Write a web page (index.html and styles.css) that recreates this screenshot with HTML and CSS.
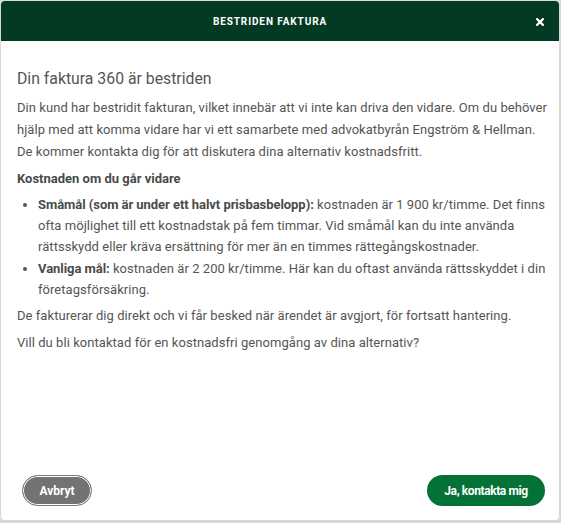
FILE: index.html
```html
<!DOCTYPE html>
<html lang="sv">
<head>
<meta charset="utf-8">
<title>Bestriden faktura</title>
<link rel="stylesheet" href="styles.css">
</head>
<body>
<div class="modal">
  <div class="modal-header">
    <span class="modal-title">BESTRIDEN FAKTURA</span>
    <button class="close" aria-label="Stäng">
      <svg width="8" height="8" viewBox="0 0 8 8"><path d="M1.1 1.1 L6.9 6.9 M6.9 1.1 L1.1 6.9" stroke="#fff" stroke-width="2.2" stroke-linecap="square"/></svg>
    </button>
  </div>
  <div class="modal-body">
    <h2 class="heading">Din faktura 360 är bestriden</h2>
    <p class="text">Din kund har bestridit fakturan, vilket innebär att vi inte kan driva den vidare. Om du behöver<br>hjälp med att komma vidare har vi ett samarbete med advokatbyrån Engström &amp; Hellman.<br>De kommer kontakta dig för att diskutera dina alternativ kostnadsfritt.</p>
    <p class="text strong">Kostnaden om du går vidare</p>
    <ul class="list">
      <li><b>Småmål (som är under ett halvt prisbasbelopp):</b> kostnaden är 1 900 kr/timme. Det finns<br>ofta möjlighet till ett kostnadstak på fem timmar. Vid småmål kan du inte använda<br>rättsskydd eller kräva ersättning för mer än en timmes rättegångskostnader.</li>
      <li><b>Vanliga mål:</b> kostnaden är 2 200 kr/timme. Här kan du oftast använda rättsskyddet i din<br>företagsförsäkring.</li>
    </ul>
    <p class="text">De fakturerar dig direkt och vi får besked när ärendet är avgjort, för fortsatt hantering.</p>
    <p class="text">Vill du bli kontaktad för en kostnadsfri genomgång av dina alternativ?</p>
  </div>
  <div class="modal-footer">
    <button class="btn btn-cancel">Avbryt</button>
    <button class="btn btn-primary">Ja, kontakta mig</button>
  </div>
</div>
</body>
</html>
```
FILE: styles.css
```css
html, body {
  margin: 0;
  padding: 0;
}
body {
  background: #d9d9d9;
  width: 561px;
  height: 523px;
  overflow: hidden;
  font-family: Roboto, "Liberation Sans", sans-serif;
}
.modal {
  margin: 1px 2px 0 1px;
  height: 519px;
  background: #fff;
  border-radius: 4px;
  overflow: hidden;
  display: flex;
  flex-direction: column;
}
.modal-header {
  position: relative;
  height: 40px;
  flex: none;
  background: #033a23;
  display: flex;
  align-items: center;
  justify-content: center;
  padding-right: 20px;
}
.modal-title {
  color: #fff;
  font-weight: 700;
  font-size: 10px;
  letter-spacing: 0.9px;
}
.close {
  position: absolute;
  right: 15px;
  top: 17px;
  width: 8px;
  height: 8px;
  padding: 0;
  border: 0;
  background: none;
  display: flex;
}
.modal-body {
  flex: 1;
  padding: 28px 4px 0 16px;
  color: #555;
}
.heading {
  margin: 0 0 8px;
  font-size: 15.8px;
  line-height: 20px;
  font-weight: 400;
  color: #555;
}
.text {
  margin: 0 0 5px;
  font-size: 13px;
  line-height: 22px;
  letter-spacing: 0.05px;
}
.strong {
  font-weight: 700;
  color: #4a4a4a;
  margin-bottom: 4px;
  letter-spacing: 0;
}
.list {
  margin: 0 0 5px;
  padding-left: 21px;
  font-size: 13px;
  line-height: 21px;
  letter-spacing: 0.05px;
}
.list li {
  margin-bottom: 1px;
}
.list b {
  color: #4a4a4a;
  letter-spacing: -0.05px;
}
.modal-footer {
  flex: none;
  display: flex;
  justify-content: space-between;
  align-items: center;
  padding: 0 14px 14px 21px;
}
.btn {
  height: 31px;
  border-radius: 16px;
  font-family: Roboto, "Liberation Sans", sans-serif;
  font-weight: 700;
  font-size: 12px;
  color: #fff;
  cursor: pointer;
}
.btn-cancel {
  width: 70px;
  background: #737373;
  border: 1px solid #7a7a7a;
  box-shadow: inset 0 0 0 1px #fff;
}
.btn-primary {
  width: 118px;
  background: #047236;
  border: 0;
  letter-spacing: -0.4px;
}
```
